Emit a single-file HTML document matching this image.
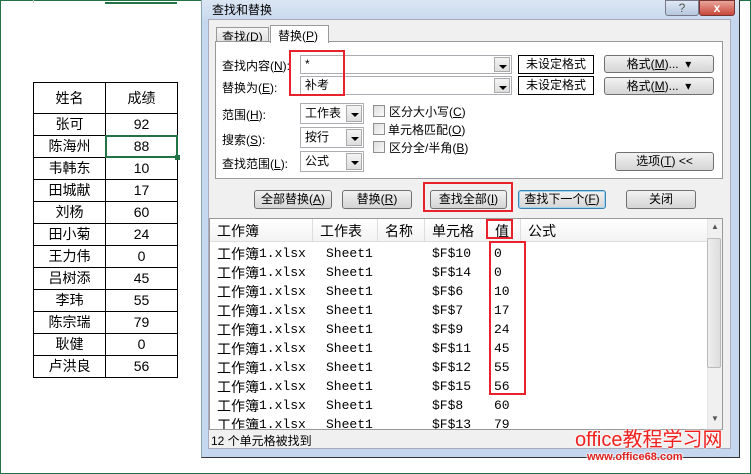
<!DOCTYPE html><html><head><meta charset="utf-8"><style>
*{box-sizing:border-box;margin:0;padding:0}
body{width:751px;height:474px;position:relative;overflow:hidden;background:#fff;font-family:"Liberation Sans","Noto Sans CJK SC",sans-serif;font-size:12px;color:#000}
.a{position:absolute}
.t{position:absolute;white-space:nowrap}
.cell{position:absolute;border:1px solid #000;text-align:center;font-size:14px}
.btn{position:absolute;border:1px solid #707070;border-radius:3px;background:linear-gradient(#f2f2f2,#e3e3e3 50%,#d5d5d5);text-align:center;font-size:12px;line-height:18px}
.inp{position:absolute;background:#fff;border:1px solid #abadb3;font-size:12px;padding-left:4px;line-height:18px}
.dd{position:absolute;width:16px;top:1px;bottom:1px;right:1px;background:linear-gradient(#f4f4f4,#ddd);border:1px solid #aaa}
.dd:after{content:"";position:absolute;left:4px;top:7px;border-left:4px solid transparent;border-right:4px solid transparent;border-top:4px solid #000}
.cb{position:absolute;width:12px;height:12px;border:1px solid #8e8f8f;background:linear-gradient(135deg,#ddd,#fafafa)}
.red{position:absolute;border:2px solid #e8222a}
.mono{font-family:"Liberation Mono","Noto Sans CJK SC",monospace;font-size:13px;line-height:16px}
.cj{font-family:"Noto Sans CJK SC",sans-serif;font-size:14px;line-height:16px}
</style></head><body>
<div class="a" style="left:0;top:0;width:751px;height:474px;border:1px solid #217346"></div>
<div class="a" style="left:33px;top:0;width:1px;height:3px;background:#ccc"></div>
<div class="a" style="left:105px;top:2px;width:72px;height:2px;background:#217346"></div>
<div class="a" style="left:33px;top:82px;width:145px;height:296px;border:1px solid #000"></div>
<div id="tbl"></div>
<div class="a" style="left:201px;top:0;width:539px;height:458px;background:#c5d7ee;border-right:1px solid #333;border-bottom:1px solid #333;border-left:1px solid #8aa"></div>
<div class="a" style="left:202px;top:0;width:537px;height:20px;background:linear-gradient(#dbe6f3,#c9d9ee)"></div>
<div class="t" style="left:212px;top:1px;font-size:12px">查找和替换</div>
<div class="a" style="left:665px;top:0;width:34px;height:16px;border:1px solid #778;border-radius:0 0 3px 3px;background:linear-gradient(#dfe8f4,#b5c7de);text-align:center;font-size:12px;line-height:14px;color:#555">?</div>
<div class="a" style="left:699px;top:0;width:36px;height:16px;border:1px solid #733;border-radius:0 0 3px 3px;background:linear-gradient(#e9a59a,#c9473a);text-align:center;color:#fff;font-weight:bold;font-size:12px;line-height:14px">x</div>
<div class="a" style="left:208px;top:19px;width:523px;height:430px;background:#f0f0f0;border:1px solid #aab"></div>
<div class="a" style="left:216px;top:27px;width:53px;height:15px;border:1px solid #999;background:linear-gradient(#f5f5f5,#e2e2e2)"></div>
<div class="t" style="left:222px;top:28px">查找(<u>D</u>)</div>
<div class="a" style="left:215px;top:41px;width:508px;height:138px;border:1px solid #999;background:#fff"></div>
<div class="a" style="left:270px;top:25px;width:59px;height:18px;border:1px solid #999;border-bottom:none;background:#fff"></div>
<div class="t" style="left:278px;top:27px">替换(<u>P</u>)</div>
<div class="t" style="left:222px;top:57px">查找内容(<u>N</u>):</div>
<div class="t" style="left:222px;top:79px">替换为(<u>E</u>):</div>
<div class="inp" style="left:300px;top:55px;width:212px;height:19px;line-height:17px">*<div class="dd"></div></div>
<div class="inp" style="left:300px;top:76px;width:212px;height:19px;line-height:17px">补考<div class="dd"></div></div>
<div class="a" style="left:518px;top:55px;width:76px;height:19px;border:1px solid #000;background:#fff;text-align:center;line-height:17px">未设定格式</div>
<div class="a" style="left:518px;top:76px;width:76px;height:19px;border:1px solid #000;background:#fff;text-align:center;line-height:17px">未设定格式</div>
<div class="btn" style="left:604px;top:55px;width:110px;height:18px;line-height:16px">格式(<u>M</u>)... &nbsp;▾</div>
<div class="btn" style="left:604px;top:77px;width:110px;height:18px;line-height:16px">格式(<u>M</u>)... &nbsp;▾</div>
<div class="red" style="left:289px;top:50px;width:56px;height:46px"></div>
<div class="t" style="left:222px;top:106px">范围(<u>H</u>):</div>
<div class="t" style="left:222px;top:131px">搜索(<u>S</u>):</div>
<div class="t" style="left:222px;top:155px">查找范围(<u>L</u>):</div>
<div class="inp" style="left:300px;top:103px;width:64px;height:21px;line-height:19px">工作表<div class="dd"></div></div>
<div class="inp" style="left:300px;top:127px;width:64px;height:21px;line-height:19px">按行<div class="dd"></div></div>
<div class="inp" style="left:300px;top:151px;width:64px;height:21px;line-height:19px">公式<div class="dd"></div></div>
<div class="cb" style="left:373px;top:105px"></div><div class="t" style="left:389px;top:103px">区分大小写(<u>C</u>)</div>
<div class="cb" style="left:373px;top:123px"></div><div class="t" style="left:388px;top:121px">单元格匹配(<u>O</u>)</div>
<div class="cb" style="left:373px;top:141px"></div><div class="t" style="left:389px;top:139px">区分全/半角(<u>B</u>)</div>
<div class="btn" style="left:615px;top:152px;width:99px;height:19px;line-height:17px">选项(<u>T</u>) &lt;&lt;</div>
<div class="btn" style="left:254px;top:190px;width:78px;height:19px;line-height:17px">全部替换(<u>A</u>)</div>
<div class="btn" style="left:342px;top:190px;width:70px;height:19px;line-height:17px">替换(<u>R</u>)</div>
<div class="btn" style="left:430px;top:190px;width:77px;height:19px;line-height:17px">查找全部(<u>I</u>)</div>
<div class="btn" style="left:518px;top:190px;width:88px;height:19px;line-height:17px;border-color:#3c7fb1;box-shadow:inset 0 0 0 1px #9ed6f0">查找下一个(<u>F</u>)</div>
<div class="btn" style="left:626px;top:190px;width:70px;height:19px;line-height:17px">关闭</div>
<div class="red" style="left:423px;top:182px;width:90px;height:30px"></div>
<div class="a" style="left:209px;top:218px;width:514px;height:212px;background:#fff;border:1px solid #999"></div>
<div class="a" style="left:210px;top:219px;width:497px;height:23px;background:linear-gradient(#fff,#f3f3f3);border-bottom:1px solid #ddd"></div>
<div class="a" style="left:312px;top:219px;width:1px;height:23px;background:#ddd"></div>
<div class="a" style="left:377px;top:219px;width:1px;height:23px;background:#ddd"></div>
<div class="a" style="left:424px;top:219px;width:1px;height:23px;background:#ddd"></div>
<div class="a" style="left:520px;top:219px;width:1px;height:23px;background:#ddd"></div>
<div class="t" style="left:217px;top:221px;font-size:14px">工作簿</div>
<div class="t" style="left:320px;top:221px;font-size:14px">工作表</div>
<div class="t" style="left:385px;top:221px;font-size:14px">名称</div>
<div class="t" style="left:432px;top:221px;font-size:14px">单元格</div>
<div class="t" style="left:495px;top:221px;font-size:14px">值</div>
<div class="t" style="left:528px;top:221px;font-size:14px">公式</div>
<div class="a" style="left:707px;top:219px;width:15px;height:210px;background:#f0f0f0;border-left:1px solid #e5e5e5"></div>
<div class="a" style="left:707px;top:238px;width:14px;height:130px;background:linear-gradient(90deg,#eee,#ddd);border:1px solid #bbb;border-radius:2px"></div>
<div class="t" style="left:711px;top:222px;font-size:8px;color:#555">▲</div>
<div class="t" style="left:711px;top:414px;font-size:8px;color:#555">▼</div>
<div id="rows" class="a" style="left:210px;top:242px;width:496px;height:187px;overflow:hidden"></div>
<div class="red" style="left:486px;top:219px;width:27px;height:20px"></div>
<div class="red" style="left:489px;top:241px;width:37px;height:154px"></div>
<div class="t" style="left:211px;top:432px;font-size:12px">12 个单元格被找到</div>
<div class="t" style="left:575px;top:423px;font-size:20px;color:#f0201e;text-shadow:0 0 2px #fff,0 0 2px #fff">office教程学习网</div>
<div class="t" style="left:587px;top:451px;font-size:11px;color:#e0201e;font-weight:bold;text-shadow:0 0 2px #fff,0 0 2px #fff,0 0 2px #fff">www.office68.com</div>
<script>
var names=["张可","陈海州","韦韩东","田城献","刘杨","田小菊","王力伟","吕树添","李玮","陈宗瑞","耿健","卢洪良"],sc=[92,88,10,17,60,24,0,45,55,79,0,56];
var h='<div class="cell" style="left:33px;top:82px;width:73px;height:32px;line-height:30px">姓名</div><div class="cell" style="left:105px;top:82px;width:73px;height:32px;line-height:30px">成绩</div>';
for(var i=0;i<12;i++){var y=113+i*22;h+='<div class="cell" style="left:33px;top:'+y+'px;width:73px;height:23px;line-height:21px">'+names[i]+'</div><div class="cell" style="left:105px;top:'+y+'px;width:73px;height:23px;line-height:21px">'+sc[i]+'</div>';}
h+='<div class="a" style="left:105px;top:135px;width:73px;height:23px;border:2px solid #217346"></div><div class="a" style="left:175px;top:155px;width:5px;height:5px;background:#217346"></div>';
document.getElementById('tbl').innerHTML=h;
var r=[["$F$10","0"],["$F$14","0"],["$F$6","10"],["$F$7","17"],["$F$9","24"],["$F$11","45"],["$F$12","55"],["$F$15","56"],["$F$8","60"],["$F$13","79"]],s='';
for(var j=0;j<r.length;j++){var y=4+j*19;s+='<div class="t cj" style="left:7px;top:'+y+'px">工作簿</div><div class="t mono" style="left:49px;top:'+y+'px">1.xlsx</div><div class="t mono" style="left:116px;top:'+y+'px">Sheet1</div><div class="t mono" style="left:222px;top:'+y+'px">'+r[j][0]+'</div><div class="t mono" style="left:284px;top:'+y+'px">'+r[j][1]+'</div>';}
document.getElementById('rows').innerHTML=s;
</script>
</body></html>
